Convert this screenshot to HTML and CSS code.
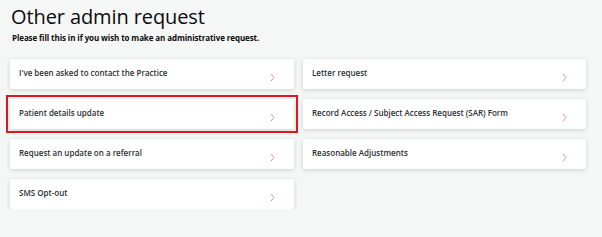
FILE: index.html
```html
<!DOCTYPE html>
<html lang="en">
<head>
    <meta charset="UTF-8">
    <meta name="viewport" content="width=device-width, initial-scale=1.0">
    <title>Other admin request</title>
    <link rel="stylesheet" href="styles.css">
</head>
<body>
    <div class="content">
        <h1>Other admin request</h1>
        <p class="intro">Please fill this in if you wish to make an administrative request.</p>

        <div class="options">
            <a href="#" class="option">
                <span>I've been asked to contact the Practice</span>
                <svg class="chevron" viewBox="0 0 5 9"><path d="M1 1l3 3.5L1 8"/></svg>
            </a>
            <a href="#" class="option">
                <span>Letter request</span>
                <svg class="chevron" viewBox="0 0 5 9"><path d="M1 1l3 3.5L1 8"/></svg>
            </a>
            <a href="#" class="option highlighted">
                <span>Patient details update</span>
                <svg class="chevron" viewBox="0 0 5 9"><path d="M1 1l3 3.5L1 8"/></svg>
            </a>
            <a href="#" class="option">
                <span>Record Access / Subject Access Request (SAR) Form</span>
                <svg class="chevron" viewBox="0 0 5 9"><path d="M1 1l3 3.5L1 8"/></svg>
            </a>
            <a href="#" class="option">
                <span>Request an update on a referral</span>
                <svg class="chevron" viewBox="0 0 5 9"><path d="M1 1l3 3.5L1 8"/></svg>
            </a>
            <a href="#" class="option">
                <span>Reasonable Adjustments</span>
                <svg class="chevron" viewBox="0 0 5 9"><path d="M1 1l3 3.5L1 8"/></svg>
            </a>
            <a href="#" class="option">
                <span>SMS Opt-out</span>
                <svg class="chevron" viewBox="0 0 5 9"><path d="M1 1l3 3.5L1 8"/></svg>
            </a>
        </div>
    </div>
</body>
</html>
```

FILE: styles.css
```css
body {
    font-family: "Open Sans", Arial, sans-serif;
    background-color: #f5f6f6;
    color: #212b32;
    margin: 0;
    padding: 0;
}

.content {
    padding: 4px 10px 0;
}

.content h1 {
    font-size: 20px;
    font-weight: 500;
    line-height: 26px;
    color: #0b0c0c;
    margin: 0 0 0 1px;
    letter-spacing: -0.1px;
}

.intro {
    font-size: 8px;
    font-weight: 700;
    line-height: 12px;
    margin: 2px 0 0 2px;
    color: #0b0c0c;
    letter-spacing: -0.1px;
}

/* Kacheln */
.options {
    display: grid;
    grid-template-columns: 284px 283px;
    grid-auto-rows: 30px;
    gap: 10px 9px;
    margin-top: 15px;
}

.option {
    display: flex;
    justify-content: space-between;
    align-items: flex-start;
    padding: 8px 19px 0 9px;
    background: #fff;
    border-radius: 2px;
    box-shadow: 0 1px 4px rgba(0, 0, 0, 0.16);
    text-decoration: none;
    color: #2b2f33;
    font-size: 8px;
    font-weight: 600;
    line-height: 12px;
}

.option.highlighted {
    border-radius: 0;
    outline: 2px solid #e3161b;
    outline-offset: 2px;
}

.chevron {
    width: 5px;
    height: 9px;
    margin-top: 6px;
    fill: none;
    stroke: #e8829b;
    stroke-width: 0.9;
}
```
